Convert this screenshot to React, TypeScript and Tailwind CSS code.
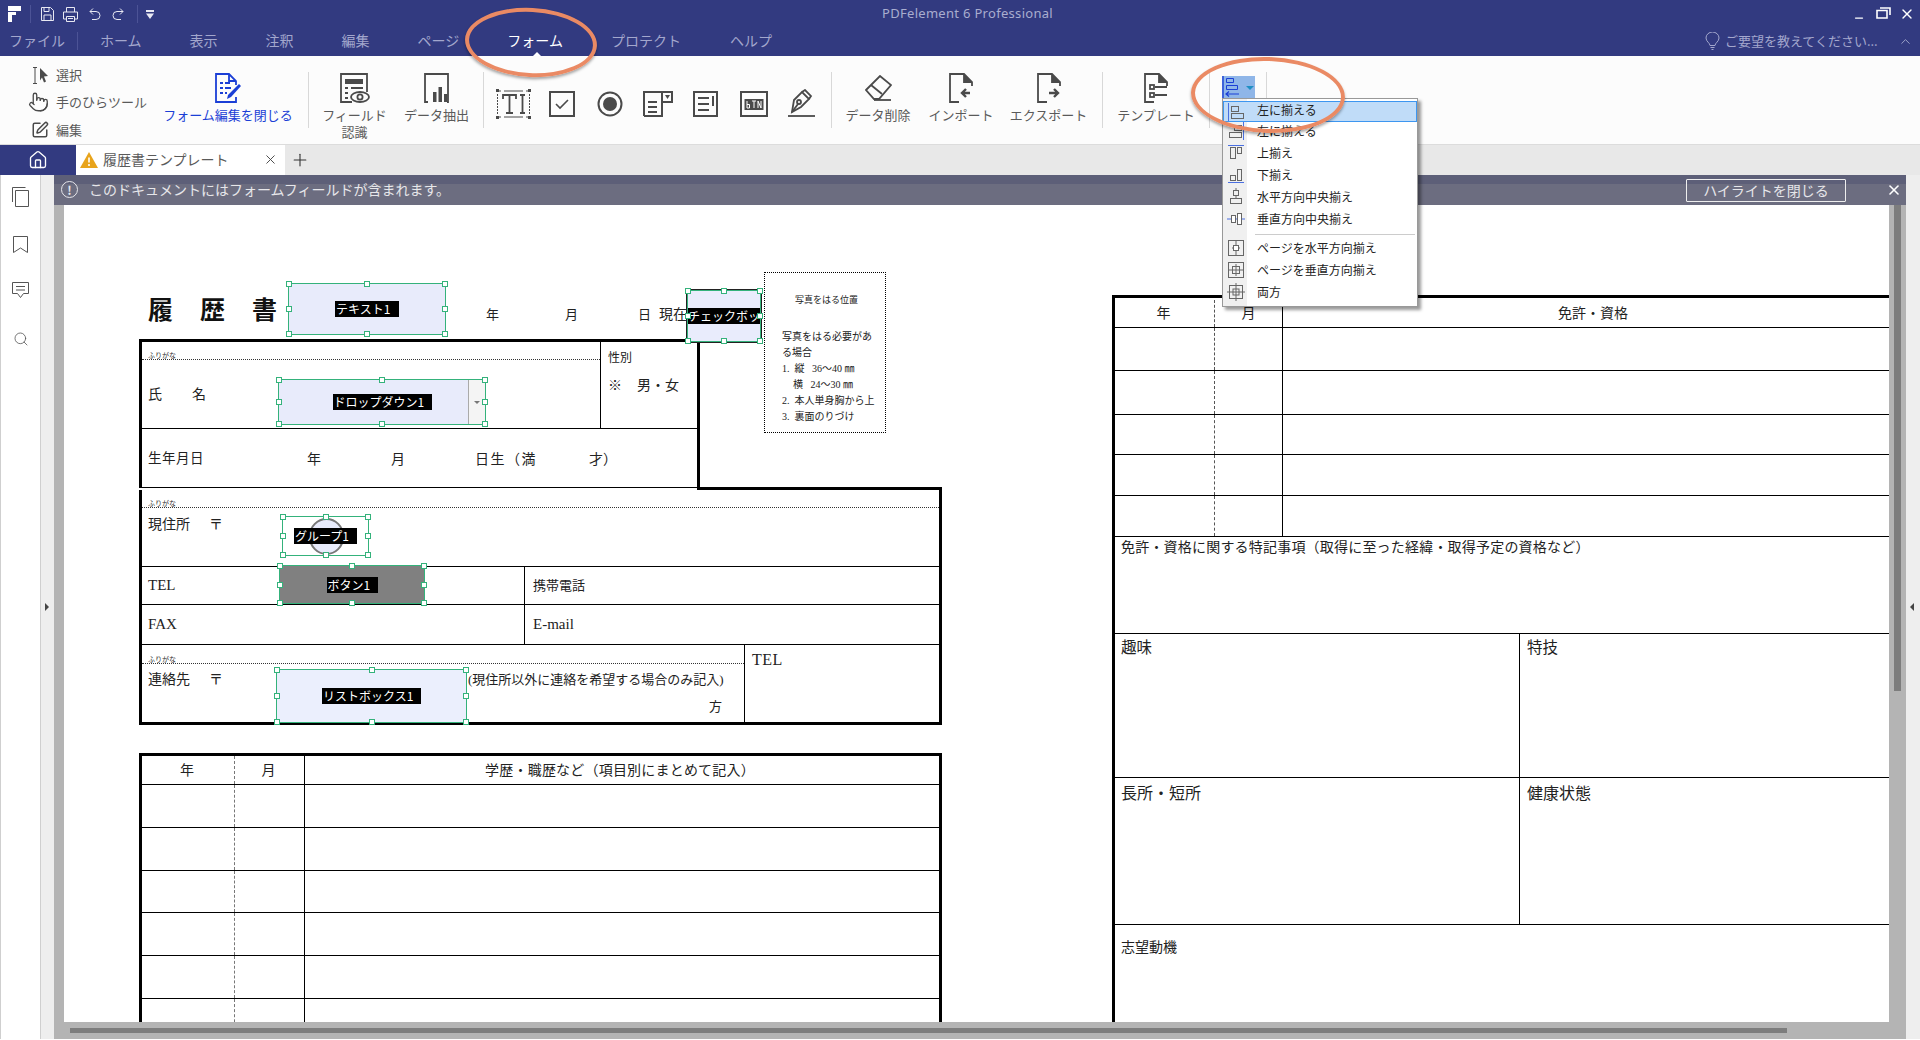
import { ChevronUp, House, Minus, Plus, Pointer, Search, SquarePen, X } from "lucide-react";

const DOC = "font-['Liberation_Serif','Noto_Sans_CJK_JP',serif] text-[#222]";

function Sep() {
  return <div className="mt-[-1px] h-[56px] w-px shrink-0 bg-[#d8d8d8]" />;
}

function BigTool({ className, icon, label, second, blue }: { className: string; icon: React.ReactNode; label: string; second?: string; blue?: boolean }) {
  return (
    <div className={`flex shrink-0 flex-col items-center ${className}`}>
      <div className="flex h-[30px] items-center justify-center">{icon}</div>
      <div className={`mt-[4px] whitespace-nowrap text-[13px] leading-[16px] ${blue ? "text-[#1b3fd6]" : "text-[#5a5a5a]"}`}>{label}</div>
      {second && <div className="mt-px whitespace-nowrap text-[13px] leading-[16px] text-[#5a5a5a]">{second}</div>}
    </div>
  );
}

function FormCloseIcon() {
  return (
    <svg width="28" height="30" viewBox="0 0 28 30" fill="none" stroke="#1b3fd6" strokeWidth="1.8">
      <path d="M4 1h11l7 7v4M22 24v5H2V1h2" />
      <path d="M15 1v7h7" />
      <path d="M6 10h3M11 10h5M6 15h3M11 15h6M6 20h3M11 20h2" />
      <path d="M25 11l2 2-10 11-4 2 1-4z" fill="#1b3fd6" stroke="none" />
    </svg>
  );
}

function FieldIcon() {
  return (
    <svg width="30" height="30" viewBox="0 0 30 30" fill="none" stroke="#4a4a4a" strokeWidth="1.8">
      <path d="M12 29H1V1h26v18" />
      <rect x="5" y="6" width="18" height="5" fill="#4a4a4a" stroke="none" />
      <path d="M5 15h3M11 15h12M5 20h3M5 25h3" />
      <ellipse cx="20" cy="24" rx="9" ry="5" />
      <circle cx="20" cy="24" r="2.6" />
    </svg>
  );
}

function DataIcon() {
  return (
    <svg width="26" height="30" viewBox="0 0 26 30" fill="none" stroke="#4a4a4a" strokeWidth="1.8">
      <path d="M4 29H1V1h23v28h-1" />
      <rect x="9" y="19" width="3.5" height="10" fill="#4a4a4a" stroke="none" />
      <rect x="14.5" y="14" width="3.5" height="15" fill="#4a4a4a" stroke="none" />
      <rect x="20" y="21" width="3.5" height="8" fill="#4a4a4a" stroke="none" />
    </svg>
  );
}

function TextFieldIcon() {
  return (
    <svg width="35" height="30" viewBox="0 0 35 30" fill="none" stroke="#4a4a4a">
      <path d="M3 2h2M8 2h19M30 2h2M3 28h2M8 28h19M30 28h2" strokeWidth="1" />
      <rect x="0" y="0" width="3" height="3" fill="#4a4a4a" stroke="none" />
      <rect x="32" y="0" width="3" height="3" fill="#4a4a4a" stroke="none" />
      <rect x="0" y="27" width="3" height="3" fill="#4a4a4a" stroke="none" />
      <rect x="32" y="27" width="3" height="3" fill="#4a4a4a" stroke="none" />
      <path d="M1.5 5v20M33.5 5v20" strokeDasharray="2 1" />
      <path d="M7 10V6h13v4M13.5 6v18M10 24h7" strokeWidth="1.8" />
      <path d="M24 6h5M26.5 6v18M24 24h5" strokeWidth="1.8" />
    </svg>
  );
}

function CheckIcon() {
  return (
    <svg width="26" height="26" viewBox="0 0 26 26" fill="none" stroke="#4a4a4a">
      <rect x="1" y="1" width="24" height="24" strokeWidth="2" />
      <path d="M7 13l4 4 8-8" strokeWidth="1.6" />
    </svg>
  );
}

function RadioIcon() {
  return (
    <svg width="26" height="26" viewBox="0 0 26 26" fill="none">
      <circle cx="13" cy="13" r="11.5" stroke="#4a4a4a" strokeWidth="2" />
      <circle cx="13" cy="13" r="7" fill="#4a4a4a" />
    </svg>
  );
}

function ComboIcon() {
  return (
    <svg width="30" height="26" viewBox="0 0 30 26" fill="none" stroke="#4a4a4a" strokeWidth="2">
      <path d="M1 25V1h28v10H19M1 25h18V11H19" />
      <path d="M19 1v10" />
      <path d="M22 4h5l-2.5 4z" fill="#4a4a4a" stroke="none" />
      <path d="M5 11h9M5 16h9M5 21h9" />
    </svg>
  );
}

function ListIcon() {
  return (
    <svg width="25" height="26" viewBox="0 0 25 26" fill="none" stroke="#4a4a4a" strokeWidth="2">
      <rect x="1" y="1" width="23" height="24" />
      <path d="M5 7h11M5 13h11M5 19h11M20 5v10" />
    </svg>
  );
}

function BtnIcon() {
  return (
    <svg width="28" height="26" viewBox="0 0 28 26" fill="none">
      <rect x="1" y="1" width="26" height="24" stroke="#4a4a4a" strokeWidth="2" />
      <rect x="4.5" y="8" width="19" height="11" fill="#4a4a4a" />
      <path d="M7 10v7h2.5v-3.5H7M12 10h4M14 10v7M18 17v-7l3 7v-7" stroke="#fff" strokeWidth="1" />
    </svg>
  );
}

function PenIcon() {
  return (
    <svg width="27" height="28" viewBox="0 0 27 28" fill="none" stroke="#4a4a4a" strokeWidth="1.8">
      <path d="M0 27h27" />
      <path d="M4 23l2-12 8-8 7 7-8 8z" />
      <path d="M14 3l3-2 6 6-2 3" />
      <circle cx="11" cy="13" r="2" />
      <path d="M4 23l6-8" />
    </svg>
  );
}

function EraserIcon() {
  return (
    <svg width="27" height="26" viewBox="0 0 27 26" fill="none" stroke="#4a4a4a" strokeWidth="1.8">
      <path d="M1 15L15 1l11 9-12 14H9z" />
      <path d="M6 10l11 9" />
      <path d="M9 25h17" />
    </svg>
  );
}

function PageIcon({ children }: { children: React.ReactNode }) {
  return (
    <svg width="24" height="30" viewBox="0 0 24 30" fill="none" stroke="#4a4a4a" strokeWidth="1.8">
      <path d="M10 29H1V1h14l8 8v4" />
      <path d="M15 1v8h8" fill="#4a4a4a" />
      {children}
    </svg>
  );
}

function AlignBtnIcon() {
  return (
    <svg width="20" height="22" viewBox="0 0 20 22" fill="none">
      <path d="M1 0v22" stroke="#1b3fd6" strokeWidth="1.4" />
      <path d="M4.500 2.500h7v4h-7zM4.500 9.500h11v4h-11z" stroke="#1b3fd6" strokeWidth="1" />
      <path d="M17 18H4M7 15.500L4 18l3 2.500" stroke="#1b3fd6" strokeWidth="1.2" />
    </svg>
  );
}

function MenuIcon({ kind }: { kind: string }) {
  const blue = "#4a6fe0";
  const g = "#666";
  return (
    <svg width="18" height="18" viewBox="0 0 18 18" fill="none" stroke={g} strokeWidth="1">
      {kind === "left" && (<><path d="M1.5 0v18" stroke={blue} /><rect x="4.5" y="3.5" width="7" height="5" /><rect x="4.5" y="10.5" width="12" height="5" /></>)}
      {kind === "right" && (<><path d="M16.5 0v18" stroke={blue} /><rect x="7.5" y="3.5" width="7" height="5" /><rect x="2.5" y="10.5" width="12" height="5" /></>)}
      {kind === "top" && (<><path d="M1 1.5h16" stroke={blue} /><rect x="3.5" y="3.5" width="5" height="11" /><rect x="10.5" y="3.5" width="4" height="6" /></>)}
      {kind === "bottom" && (<><path d="M1 16.5h16" stroke={blue} /><rect x="3.5" y="9.5" width="5" height="5" /><rect x="10.5" y="3.5" width="4" height="11" /></>)}
      {kind === "hcenter" && (<><path d="M9 0v3M9 8v2" /><rect x="6.5" y="2.5" width="5" height="5" /><rect x="3.5" y="10.5" width="11" height="5" /></>)}
      {kind === "vcenter" && (<><path d="M0 9h18" stroke={blue} /><rect x="4.5" y="5.5" width="4" height="7" fill="#fff" /><rect x="10.5" y="3.5" width="4" height="11" fill="#fff" /></>)}
      {kind === "pageh" && (<><rect x="1.5" y="1.5" width="15" height="15" /><path d="M5 9h8M9 1v16" /><rect x="6.5" y="6.5" width="5" height="5" fill="#fff" /></>)}
      {kind === "pagev" && (<><rect x="1.5" y="1.5" width="15" height="15" /><path d="M1 9h16M9 3v12" /><rect x="5.5" y="5.5" width="7" height="7" /></>)}
      {kind === "both" && (<><rect x="2.5" y="2.5" width="13" height="13" /><path d="M0 9h18M9 0v18" /><rect x="6" y="6" width="6" height="6" /></>)}
    </svg>
  );
}

function MenuRow({ kind, label }: { kind: string; label: string }) {
  return (
    <div className="flex h-[22px] items-center text-[12px] text-[#222]">
      <div className="flex w-[24px] justify-center pl-px"><MenuIcon kind={kind} /></div>
      <div className="ml-[10px] whitespace-nowrap">{label}</div>
    </div>
  );
}

function Handles() {
  const base = "absolute h-[6px] w-[6px] border border-[#34b27b] bg-white";
  return (
    <>
      <div className={`${base} -left-[3px] -top-[3px]`} />
      <div className={`${base} left-1/2 -top-[3px] -ml-[3px]`} />
      <div className={`${base} -right-[3px] -top-[3px]`} />
      <div className={`${base} -left-[3px] top-1/2 -mt-[3px]`} />
      <div className={`${base} -right-[3px] top-1/2 -mt-[3px]`} />
      <div className={`${base} -left-[3px] -bottom-[3px]`} />
      <div className={`${base} left-1/2 -bottom-[3px] -ml-[3px]`} />
      <div className={`${base} -right-[3px] -bottom-[3px]`} />
    </>
  );
}

function Field({ className, label, labelClass, children }: { className: string; label: string; labelClass: string; children?: React.ReactNode }) {
  return (
    <div className={`absolute flex items-center justify-center border border-[#34b27b] ${className}`}>
      {children}
      <div className={`relative flex h-[16px] items-center overflow-hidden whitespace-nowrap bg-black font-['Noto_Sans_CJK_JP',sans-serif] text-[12px] leading-none text-white ${labelClass}`}>{label}</div>
      <Handles />
    </div>
  );
}

function Furigana() {
  return <div className="absolute -bottom-[2px] left-[6px] text-[7px] leading-[9px] text-[#333]">ふりがな</div>;
}

function PersonalTable() {
  return (
    <div className="absolute left-[75px] top-[164px] w-[803px] text-[13px]">
      <div className="w-[561px] border-[3px] border-b-0 border-black">
        <div className="flex h-[86px]">
          <div className="flex-1">
            <div className="relative h-[18px] border-b border-dotted border-[#333]"><Furigana /></div>
            <div className="flex h-[68px] items-center pl-[6px] text-[14px]"><span>氏</span><span className="ml-[30px]">名</span></div>
          </div>
          <div className="w-[97px] border-l border-black pl-[7px] pt-[7px]">
            <div className="text-[12px] leading-[18px]">性別</div>
            <div className="mt-[9px] whitespace-nowrap text-[14px] leading-[20px]">※<span className="ml-[15px]">男・女</span></div>
          </div>
        </div>
        <div className="flex h-[59px] items-center border-t border-black pl-[6px] pt-[2px] text-[14px]">
          <span className="text-[13.5px] tracking-[0.5px]">生年月日</span>
          <span className="ml-[103px]">年</span>
          <span className="ml-[70px]">月</span>
          <span className="ml-[70px] tracking-[1.5px]">日生（満</span>
          <span className="ml-[52px]">才）</span>
        </div>
      </div>
      <div className="flex h-[3px] w-[803px]">
        <div className="h-px w-[558px] bg-black" />
        <div className="h-[3px] flex-1 bg-black" />
      </div>
      <div className="w-[803px] border-x-[3px] border-b-[3px] border-black">
        <div className="h-[77px] border-b border-black">
          <div className="relative h-[18px] border-b border-dotted border-[#333]"><Furigana /></div>
          <div className="flex pl-[6px] pt-[7px] text-[14px] leading-[20px]"><span>現住所</span><span className="ml-[19px]">〒</span></div>
        </div>
        <div className="flex h-[38px] border-b border-black">
          <div className="flex w-[383px] items-center border-r border-black pl-[6px] text-[15px]">TEL</div>
          <div className="flex items-center pl-[8px]">携帯電話</div>
        </div>
        <div className="flex h-[40px] border-b border-black">
          <div className="flex w-[383px] items-center border-r border-black pl-[6px] text-[15px]">FAX</div>
          <div className="flex items-center pl-[8px] text-[15px]">E-mail</div>
        </div>
        <div className="flex h-[77px]">
          <div className="w-[603px] border-r border-black">
            <div className="relative h-[19px] border-b border-dotted border-[#333]"><Furigana /></div>
            <div className="flex pl-[6px] pt-[6px] text-[14px] leading-[20px]">
              <span>連絡先</span><span className="ml-[19px]">〒</span>
              <span className="ml-[245px] whitespace-nowrap text-[13px]">(現住所以外に連絡を希望する場合のみ記入)</span>
            </div>
            <div className="mt-[7px] pr-[22px] text-right leading-[20px]">方</div>
          </div>
          <div className="pl-[7px] pt-[5px] text-[16px] leading-[20px] tracking-[0.5px]">TEL</div>
        </div>
      </div>
    </div>
  );
}

function HistRow({ className, a, b, c }: { className: string; a?: string; b?: string; c?: string }) {
  return (
    <div className={`flex border-b border-black text-[14px] ${className}`}>
      <div className="flex w-[93px] items-center justify-center border-r border-dashed border-[#777] pr-[2px]">{a}</div>
      <div className="flex w-[70px] items-center justify-center border-r border-black pr-[2px]">{b}</div>
      <div className="flex flex-1 items-center justify-center whitespace-nowrap pr-[4px] tracking-[0.2px]">{c}</div>
    </div>
  );
}

function HistoryTable() {
  return (
    <div className="absolute left-[75px] top-[578px] w-[803px] border-x-[3px] border-t-[3px] border-black">
      <HistRow className="h-[29px]" a="年" b="月" c="学歴・職歴など（項目別にまとめて記入）" />
      <HistRow className="h-[43px]" />
      <HistRow className="h-[43px]" />
      <HistRow className="h-[42px]" />
      <HistRow className="h-[43px]" />
      <HistRow className="h-[43px]" />
      <HistRow className="h-[70px]" />
    </div>
  );
}

function LicRow({ className, a, b, c }: { className: string; a?: string; b?: string; c?: string }) {
  return (
    <div className={`flex border-b border-black ${className}`}>
      <div className="flex w-[100px] items-center justify-center border-r border-dashed border-[#555] pr-[2px]">{a}</div>
      <div className="flex w-[68px] items-center justify-center border-r border-black">{b}</div>
      <div className="flex w-[608px] items-center justify-center whitespace-nowrap pl-[12px]">{c}</div>
    </div>
  );
}

function LicenseTable() {
  return (
    <div className="absolute left-[1048px] top-[120px] w-[860px] border-l-[3px] border-t-[3px] border-black text-[14px] leading-[20px]">
      <LicRow className="h-[30px] pt-[2px]" a="年" b="月" c="免許・資格" />
      <LicRow className="h-[43px]" />
      <LicRow className="h-[44px]" />
      <LicRow className="h-[40px]" />
      <LicRow className="h-[41px]" />
      <LicRow className="h-[41px]" />
      <div className="h-[97px] border-b border-black pl-[6px] pt-px tracking-[0.2px]">免許・資格に関する特記事項（取得に至った経緯・取得予定の資格など）</div>
      <div className="flex h-[144px] border-b border-black text-[15.5px]">
        <div className="w-[405px] border-r border-black pl-[6px] pt-[4px]">趣味</div>
        <div className="pl-[7px] pt-[4px]">特技</div>
      </div>
      <div className="flex h-[147px] border-b border-black text-[16px]">
        <div className="w-[405px] border-r border-black pl-[6px] pt-[6px]">長所・短所</div>
        <div className="pl-[7px] pt-[6px]">健康状態</div>
      </div>
      <div className="h-[120px] pl-[6px] pt-[13px]">志望動機</div>
    </div>
  );
}

function PhotoBox() {
  return (
    <div className="absolute left-[700px] top-[97px] h-[161px] w-[122px] border border-dotted border-black pl-[17px] pt-[19px] text-[10px] leading-[16px]">
      <div className="pl-[13px] text-[9px]">写真をはる位置</div>
      <div className="mt-[21px] w-[92px]">写真をはる必要があ</div>
      <div>る場合</div>
      <div className="whitespace-nowrap">1.&nbsp; 縦 &nbsp; 36〜40 ㎜</div>
      <div className="whitespace-nowrap pl-[11px]">横 &nbsp; 24〜30 ㎜</div>
      <div className="whitespace-nowrap">2.&nbsp; 本人単身胸から上</div>
      <div className="whitespace-nowrap">3.&nbsp; 裏面のりづけ</div>
    </div>
  );
}

function Document() {
  return (
    <div className={`absolute inset-0 overflow-hidden bg-white ${DOC}`}>
      <div className="absolute left-[84px] top-[122px] whitespace-nowrap text-[25px] font-bold leading-[28px] tracking-[27px] text-[#111]">履歴書</div>
      <div className="absolute left-[422px] top-[130px] flex whitespace-nowrap text-[13px] leading-[20px]">
        <span>年</span><span className="ml-[66px]">月</span><span className="ml-[60px]">日</span><span className="ml-[8px] text-[14px]">現在</span>
      </div>
      <PersonalTable />
      <HistoryTable />
      <LicenseTable />
      <PhotoBox />

      <Field className="left-[224px] top-[108px] h-[52px] w-[158px] bg-[#e8ebfb]" label="テキスト1" labelClass="w-[64px] pl-px" />
      <Field className="left-[623px] top-[115px] h-[52px] w-[74px] bg-[#e9ecfc] outline outline-1 outline-[#222]" label="チェックボッ" labelClass="w-full justify-center" />
      <Field className="left-[214px] top-[204px] h-[46px] w-[208px] bg-[#e8ebfb]" label="ドロップダウン1" labelClass="w-[99px] pl-px">
        <div className="absolute inset-y-0 right-0 flex w-[17px] items-center justify-center border-l border-[#aaa] bg-[#f4f4f4]">
          <div className="h-0 w-0 border-x-[3px] border-t-[3px] border-x-transparent border-t-[#777]" />
        </div>
      </Field>
      <Field className="left-[218px] top-[341px] h-[40px] w-[87px]" label="グループ1" labelClass="w-[63px] pl-px">
        <div className="absolute left-[26px] top-px h-[37px] w-[35px] rounded-full border-2 border-[#777] bg-[#e8ebfb]" />
      </Field>
      <Field className="left-[215px] top-[390px] h-[39px] w-[146px] bg-[#808080]" label="ボタン1" labelClass="w-[51px] pl-px" />
      <Field className="left-[212px] top-[494px] h-[54px] w-[191px] bg-[#ebeffd]" label="リストボックス1" labelClass="w-[99px] pl-px" />
    </div>
  );
}

export default function App() {
  return (
    <div className="relative h-[1040px] w-[1920px] overflow-hidden bg-white font-['Noto_Sans_CJK_JP',sans-serif]">
      {/* title bar */}
      <div className="flex h-[56px] flex-col bg-[#323a80]">
        <div className="flex h-[28px] items-center">
          <svg className="ml-[8px]" width="13" height="16" viewBox="0 0 13 16" fill="#fff"><path d="M0 0h13v5H0zM0 6h8v3H4v7H0z" /></svg>
          <div className="ml-[9px] h-[18px] w-px bg-[#4c5396]" />
          <svg className="ml-[10px]" width="13" height="14" viewBox="0 0 13 14" fill="none" stroke="#e8e8f2"><path d="M.5.5h9l3 3v10H.5zM3 .5v4h5v-4M3 13.5V8h7v5.5" /></svg>
          <svg className="ml-[9px]" width="15" height="15" viewBox="0 0 15 15" fill="none" stroke="#e8e8f2"><path d="M3.5 5V.5h8V5M3.5 12H.5V5h14v7h-3M3.5 9.5h8v5h-8zM5 11.5h5" /></svg>
          <svg className="ml-[11px]" width="12" height="13" viewBox="0 0 12 13" fill="none" stroke="#e8e8f2"><path d="M4 .5L1 3.5l3 3M1 3.5h6a4 4 0 010 8H3" /></svg>
          <svg className="ml-[11px]" width="12" height="13" viewBox="0 0 12 13" fill="none" stroke="#e8e8f2"><path d="M8 .5l3 3-3 3M11 3.5H5a4 4 0 000 8h4" /></svg>
          <div className="ml-[13px] h-[18px] w-px bg-[#4c5396]" />
          <svg className="ml-[8px]" width="8" height="9" viewBox="0 0 8 9" fill="#e8e8f2"><path d="M0 0h8v2H0zM0 3.500h8L4 9z" /></svg>
          <div className="-mt-[2px] ml-[728px] whitespace-nowrap font-['Noto_Sans',sans-serif] text-[13px] leading-none tracking-[0.3px] text-[#a9adcf]">PDFelement 6 Professional</div>
          <Minus className="ml-auto mt-[8px] h-[14px] w-[12px] text-white" strokeWidth={2.5} />
          <svg className="ml-[11px] mt-[-2px]" width="15" height="12" viewBox="0 0 15 12" fill="none" stroke="#fff" strokeWidth="1.6"><path d="M1 3.500h10v7.500H1zM4 1h10v7" /></svg>
          <X className="ml-[8px] mr-[5px] h-[16px] w-[16px] text-white" strokeWidth={2} />
        </div>
        <div className="relative flex h-[28px] items-start whitespace-nowrap text-[14px] leading-[25px] text-[#a3a7cd]">
          <div className="ml-[9px]">ファイル</div>
          <div className="ml-[12px] mt-[4px] h-[18px] w-px bg-[#4c5396]" />
          <div className="ml-[22px]">ホーム</div>
          <div className="ml-[48px]">表示</div>
          <div className="ml-[48px]">注釈</div>
          <div className="ml-[48px]">編集</div>
          <div className="ml-[48px]">ページ</div>
          <div className="ml-[48px] text-white">フォーム</div>
          <div className="ml-[48px]">プロテクト</div>
          <div className="ml-[49px]">ヘルプ</div>
          <div className="absolute bottom-0 left-[533px] h-0 w-0 border-x-[4px] border-b-[4px] border-x-transparent border-b-white" />
          <svg className="ml-[933px] mt-[4px]" width="15" height="18" viewBox="0 0 15 18" fill="none" stroke="#a3a7cd"><path d="M5 13.500C5 11 1 9.500 1 6a6.500 6 0 0113 0c0 3.500-4 5-4 7.500zM5.500 15.500h4M6.500 17.500h2" /></svg>
          <div className="ml-[5px] text-[13px]">ご要望を教えてください...</div>
          <ChevronUp className="ml-auto mr-[7px] mt-[6px] h-[15px] w-[15px]" strokeWidth={1.5} />
        </div>
      </div>

      {/* ribbon */}
      <div className="flex h-[89px] items-start border-b border-[#dcdcdc] bg-[#fcfcfc] pt-[17px]">
        <div className="-mt-[9px] ml-[29px] w-[121px] shrink-0 text-[13px] text-[#5a5a5a]">
          <div className="flex h-[22px] items-center">
            <svg className="ml-[4px]" width="16" height="17" viewBox="0 0 16 17" fill="none"><path d="M0 .5h4M2 .5v16M0 16.500h4" stroke="#4a4a4a" /><path d="M7 1l8 8-4 .5 2 5-2 1-2-5-2 3z" fill="#4a4a4a" /></svg>
            <span className="ml-[7px]">選択</span>
          </div>
          <div className="mt-[4px] flex h-[24px] items-center">
            <Pointer className="-ml-px h-[26px] w-[21px] text-[#4a4a4a]" strokeWidth={1.5} />
            <span className="ml-[7px] whitespace-nowrap">手のひらツール</span>
          </div>
          <div className="mt-[6px] flex h-[20px] items-center">
            <SquarePen className="ml-[2px] h-[18px] w-[18px] text-[#4a4a4a]" strokeWidth={2} />
            <span className="ml-[7px]">編集</span>
          </div>
        </div>
        <BigTool className="ml-[13px] w-[130px]" icon={<FormCloseIcon />} label="フォーム編集を閉じる" blue />
        <div className="ml-[15px]"><Sep /></div>
        <BigTool className="ml-[13px] w-[65px]" icon={<FieldIcon />} label="フィールド" second="認識" />
        <BigTool className="ml-[17px] w-[65px]" icon={<DataIcon />} label="データ抽出" />
        <div className="ml-[14px]"><Sep /></div>
        <div className="ml-[12px] mt-[16px] shrink-0"><TextFieldIcon /></div>
        <div className="ml-[18px] mt-[18px] shrink-0"><CheckIcon /></div>
        <div className="ml-[22px] mt-[18px] shrink-0"><RadioIcon /></div>
        <div className="ml-[20px] mt-[18px] shrink-0"><ComboIcon /></div>
        <div className="ml-[20px] mt-[18px] shrink-0"><ListIcon /></div>
        <div className="ml-[22px] mt-[18px] shrink-0"><BtnIcon /></div>
        <div className="ml-[20px] mt-[16px] shrink-0"><PenIcon /></div>
        <div className="ml-[16px]"><Sep /></div>
        <BigTool className="ml-[13px] w-[66px]" icon={<EraserIcon />} label="データ削除" />
        <BigTool className="ml-[18px] w-[64px]" icon={<PageIcon><path d="M21 20h-8M17 16l-4 4 4 4" strokeWidth="2.4" /></PageIcon>} label="インポート" />
        <BigTool className="ml-[16px] w-[79px]" icon={<PageIcon><path d="M12 20h8M17 16l4 4-4 4" strokeWidth="2.4" /></PageIcon>} label="エクスポート" />
        <div className="ml-[14px]"><Sep /></div>
        <BigTool className="ml-[14px] w-[78px]" icon={<PageIcon><path d="M11 14h12M11 22h12" /><rect x="6" y="12" width="4" height="4" /><rect x="6" y="20" width="4" height="4" /></PageIcon>} label="テンプレート" />
        <div className="ml-[14px]"><Sep /></div>
        <div className="ml-[12px] mt-[3px] flex h-[22px] w-[33px] shrink-0 items-center bg-[#8fb6e8]">
          <AlignBtnIcon />
          <div className="ml-[4px] mt-[2px] h-0 w-0 border-x-[4px] border-t-[4px] border-x-transparent border-t-[#1f8fc4]" />
        </div>
        <div className="ml-[11px]"><Sep /></div>
      </div>

      {/* tabs */}
      <div className="flex h-[30px] bg-[#e8e8e8]">
        <div className="flex w-[76px] items-center justify-center bg-[#323a80]">
          <House className="h-[20px] w-[20px] text-white" strokeWidth={1.6} />
        </div>
        <div className="flex w-[209px] items-center bg-white pb-px text-[14px] text-[#5a5a5a]">
          <svg className="ml-[4px]" width="18" height="16" viewBox="0 0 18 16"><path d="M9 0l9 16H0z" fill="#e8a41c" /><path d="M9 5.500v5M9 12v2" stroke="#fff" strokeWidth="1.600" /></svg>
          <span className="ml-[5px] whitespace-nowrap">履歴書テンプレート</span>
          <X className="ml-auto mr-[7px] h-[15px] w-[15px] text-[#444]" strokeWidth={1.5} />
        </div>
        <Plus className="ml-[5px] mt-[5px] h-[20px] w-[20px] text-[#333]" strokeWidth={1.3} />
      </div>

      {/* body */}
      <div className="flex h-[864px]">
        <div className="flex w-[41px] shrink-0 flex-col items-center border-x border-[#cfcfcf] bg-white pt-[12px] text-[#555]">
          <svg width="17" height="20" viewBox="0 0 17 20" fill="none" stroke="#555"><path d="M.5 15V.500h13M3.500 19.500v-16h13v16z" /></svg>
          <svg className="mt-[29px]" width="15" height="17" viewBox="0 0 15 17" fill="none" stroke="#555"><path d="M.5.500h14v16L7.500 12l-7 4.500z" /></svg>
          <svg className="mt-[29px]" width="17" height="17" viewBox="0 0 17 17" fill="none" stroke="#555"><path d="M.5.500h16v11h-5l-3 4-3-4h-5zM4 4.500h9M4 8h9" /></svg>
          <Search className="mt-[32px] h-[16px] w-[16px] text-[#555]" strokeWidth={1.2} />
        </div>
        <div className="relative w-[13px] shrink-0 bg-[#eeeeee]">
          <div className="absolute left-[4px] top-[428px] h-0 w-0 border-y-[4px] border-l-[4px] border-y-transparent border-l-[#444]" />
        </div>

        <div className="relative flex flex-1 flex-col bg-[#b4b4b4]">
          <div className="flex flex-1">
            <div className="ml-[10px] relative flex-1"><Document /></div>
            <div className="w-[17px] pl-[5px] pt-[21px]"><div className="h-[495px] w-[7px] bg-[#7d7d7d]" /></div>
          </div>
          <div className="h-[17px] pl-[16px] pt-[6px]"><div className="h-[5px] w-[1717px] bg-[#7d7d7d]" /></div>

          {/* notice bar */}
          <div className="absolute inset-x-0 top-0 flex h-[30px] items-center border-t-[9px] border-[#5d5f78] bg-[#6c6d80]">
            <div className="-mt-[10px] flex h-[30px] items-center">
              <div className="ml-[7px] flex h-[17px] w-[17px] items-center justify-center rounded-full border-[1.5px] border-[#e6e6ea] text-[12px] font-bold leading-none text-[#e6e6ea]">!</div>
              <div className="ml-[11px] whitespace-nowrap text-[14px] text-[#e6e6ea]">このドキュメントにはフォームフィールドが含まれます。</div>
            </div>
            <div className="-mt-[9px] ml-auto flex h-[23px] w-[160px] items-center justify-center rounded-[1px] border border-[#eee] text-[14px] leading-none text-[#e6e6ea]">ハイライトを閉じる</div>
            <X className="-mt-[9px] ml-[40px] mr-[4px] h-[16px] w-[16px] text-white" strokeWidth={2.4} />
          </div>
        </div>

        <div className="relative w-[14px] shrink-0 bg-[#eeeeee]">
          <div className="absolute left-[4px] top-[428px] h-0 w-0 border-y-[4px] border-r-[4px] border-y-transparent border-r-[#444]" />
        </div>
      </div>

      {/* align menu */}
      <div className="absolute left-[1222px] top-[98px] w-[196px] border border-[#999] bg-white shadow-[3px_3px_3px_rgba(0,0,0,0.4)]">
        <div className="absolute inset-y-0 left-0 w-[24px] bg-[#f0f0f0]" />
        <div className="relative">
          <div className="h-[21px] pt-[2px]">
            <div className="flex h-[21px] items-center border border-[#3d96f0] bg-[#c0dcf8] pb-[4px] text-[12px] text-[#222]">
              <div className="flex w-[23px] justify-center pt-[4px]"><MenuIcon kind="left" /></div>
              <div className="ml-[10px]">左に揃える</div>
            </div>
          </div>
          <MenuRow kind="right" label="左に揃える" />
          <MenuRow kind="top" label="上揃え" />
          <MenuRow kind="bottom" label="下揃え" />
          <MenuRow kind="hcenter" label="水平方向中央揃え" />
          <MenuRow kind="vcenter" label="垂直方向中央揃え" />
          <div className="ml-[32px] mr-[2px] mt-[4px] mb-[2px] h-px bg-[#ccc]" />
          <MenuRow kind="pageh" label="ページを水平方向揃え" />
          <MenuRow kind="pagev" label="ページを垂直方向揃え" />
          <MenuRow kind="both" label="両方" />
          <div className="h-[3px]" />
        </div>
      </div>

      {/* annotation rings */}
      <div className="absolute left-[465px] top-[8px] h-[69px] w-[132px] rotate-[3deg] rounded-[50%] border-[4px] border-[#ea8a64] shadow-[0_2px_3px_rgba(0,0,0,0.35)]" />
      <div className="absolute left-[1191px] top-[57px] h-[76px] w-[154px] rotate-[2deg] rounded-[50%] border-[4px] border-[#ea8a64] shadow-[0_2px_3px_rgba(0,0,0,0.35)]" />
    </div>
  );
}
